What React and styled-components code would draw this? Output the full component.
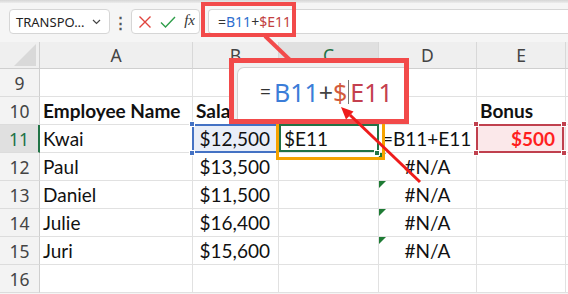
import styled, { createGlobalStyle } from "styled-components";

const GlobalStyle = createGlobalStyle`
  html, body { margin: 0; padding: 0; background: #f5f5f5; }
  * { box-sizing: border-box; }
`;

const rows = [
  { n: 9 },
  { n: 10, a: "Employee Name", b: "Sala", e: "Bonus", head: true },
  { n: 11, a: "Kwai", b: "$12,500", c: "$E11", d: "=B11+E11", e: "$500", active: true },
  { n: 12, a: "Paul", b: "$13,500", d: "#N/A", flag: true },
  { n: 13, a: "Daniel", b: "$11,500", d: "#N/A", flag: true },
  { n: 14, a: "Julie", b: "$16,400", d: "#N/A", flag: true },
  { n: 15, a: "Juri", b: "$15,600", d: "#N/A", flag: true },
  { n: 16 },
];

const cols = ["A", "B", "C", "D", "E", ""];

export default function App() {
  return (
    <Page>
      <GlobalStyle />
      <TopEdge />
      <FormulaBar>
        <NameBox>
          <span>TRANSPO...</span>
          <svg width="9" height="6" viewBox="0 0 9 6">
            <path d="M1 1l3.5 3.5L8 1" fill="none" stroke="#444" strokeWidth="1.2" />
          </svg>
        </NameBox>
        <Dots>⋮</Dots>
        <ActionBox>
          <svg width="14" height="14" viewBox="0 0 14 14">
            <path d="M1.5 1.5l11 11M12.5 1.5l-11 11" stroke="#e0443e" strokeWidth="1.4" />
          </svg>
          <svg width="16" height="14" viewBox="0 0 16 14">
            <path d="M1 7.5l4.5 4.5L15 2" fill="none" stroke="#2e9e4a" strokeWidth="1.4" />
          </svg>
          <Fx>fx</Fx>
        </ActionBox>
        <FormulaInput>
          <Ref $color="#333">=</Ref>
          <Ref $color="#2f6fcf">B11</Ref>
          <Ref $color="#333">+</Ref>
          <Ref $color="#c2403f">$E11</Ref>
        </FormulaInput>
      </FormulaBar>

      <Grid>
        <Corner>
          <svg width="22" height="22" viewBox="0 0 22 22">
            <path d="M22 0V22H0Z" fill="#d9d9d9" />
          </svg>
        </Corner>
        {cols.map((c) => (
          <ColHead key={c || "f"} $selected={c === "C"}>{c}</ColHead>
        ))}
        {rows.map((r) => [
          <RowHead key={r.n + "h"} $selected={r.active}>{r.n}</RowHead>,
          <Cell key={r.n + "a"} $bold={r.head}>{r.a}</Cell>,
          r.active ? (
            <BlueRefCell key={r.n + "b"} $align="right">
              {r.b}
              <Handle $color="#4472c4" $pos="tl" />
              <Handle $color="#4472c4" $pos="bl" />
            </BlueRefCell>
          ) : (
            <Cell key={r.n + "b"} $bold={r.head} $align={r.head ? "left" : "right"}>{r.b}</Cell>
          ),
          r.active ? (
            <ActiveCell key={r.n + "c"}>
              {r.c}
              <Handle $color="#217346" $pos="br" />
            </ActiveCell>
          ) : (
            <Cell key={r.n + "c"} />
          ),
          <DCell key={r.n + "d"} $flag={r.flag} $align={r.flag ? "center" : "left"}>{r.d}</DCell>,
          r.active ? (
            <RedRefCell key={r.n + "e"} $align="right">
              {r.e}
              <Handle $color="#c0404e" $pos="tl" />
              <Handle $color="#c0404e" $pos="tr" />
              <Handle $color="#c0404e" $pos="bl" />
              <Handle $color="#c0404e" $pos="br" />
            </RedRefCell>
          ) : (
            <Cell key={r.n + "e"} $bold={r.head}>{r.e}</Cell>
          ),
          <Cell key={r.n + "f"} />,
        ])}
      </Grid>

      <BarHighlight />
      <Callout>
        <ZoomedInput>
          <BigRef $color="#333" $small>=</BigRef>
          <BigRef $color="#3b7dd8">B11</BigRef>
          <BigRef $color="#444">+</BigRef>
          <BigRef $color="#d25a3c">$</BigRef>
          <Caret />
          <BigRef $color="#c4404f">E11</BigRef>
        </ZoomedInput>
      </Callout>

      <Arrows width="568" height="294" viewBox="0 0 568 294">
        <line x1="265" y1="36" x2="290" y2="60" stroke="#f24a4a" strokeWidth="4" />
        <line x1="420" y1="182" x2="350" y2="115" stroke="#ee1c1c" strokeWidth="3" />
        <polygon points="341,107 353.5,111.5 346,119.5" fill="#ee1c1c" />
      </Arrows>
    </Page>
  );
}

const Page = styled.div`
  position: relative;
  width: 568px;
  height: 294px;
  overflow: hidden;
  background: #f5f5f5;
  font-family: "Noto Sans", "Open Sans", sans-serif;
`;

const TopEdge = styled.div`
  height: 3px;
  background: linear-gradient(#d6d6d6, #ececec);
`;

const FormulaBar = styled.div`
  display: flex;
  align-items: center;
  height: 39px;
  padding: 6px 0 8px 9px;
`;

const Box = styled.div`
  height: 25px;
  background: #fff;
  border: 1px solid #d6d6d6;
  border-radius: 4px;
  display: flex;
  align-items: center;
`;

const NameBox = styled(Box)`
  width: 101px;
  padding: 0 8px 0 6px;
  justify-content: space-between;
  font-size: 13px;
  color: #222;
`;

const Dots = styled.div`
  width: 21px;
  text-align: center;
  font-size: 15px;
  font-weight: 700;
  color: #555;
`;

const ActionBox = styled(Box)`
  width: 69px;
  padding: 0 4px 0 6px;
  justify-content: space-between;
`;

const Fx = styled.span`
  font-family: "Liberation Serif", serif;
  font-style: italic;
  font-size: 15px;
  color: #333;
  margin-top: -2px;
`;

const FormulaInput = styled(Box)`
  flex: 1;
  margin-left: 8px;
  border-radius: 4px 0 0 4px;
  border-right: none;
  padding-left: 9px;
  font-size: 14px;
`;

const Ref = styled.span`
  color: ${(p) => p.$color};
`;

const Grid = styled.div`
  display: grid;
  grid-template-columns: 40px 153px 86px 100px 98px 89px 1fr;
  grid-template-rows: 27px repeat(8, 28px);
  background: #fff;
`;

const Corner = styled.div`
  background: #efefef;
  border-right: 1px solid #cfcfcf;
  border-bottom: 1px solid #cfcfcf;
  display: flex;
  align-items: flex-end;
  justify-content: flex-end;
  padding: 0 3px 2px 0;
`;

const ColHead = styled.div`
  background: ${(p) => (p.$selected ? "#e0e0e0" : "#efefef")};
  color: ${(p) => (p.$selected ? "#217346" : "#444")};
  border-right: 1px solid #d8d8d8;
  border-bottom: ${(p) => (p.$selected ? "2px solid #217346" : "1px solid #cfcfcf")};
  display: flex;
  align-items: center;
  justify-content: center;
  font-size: 17.5px;
`;

const RowHead = styled.div`
  background: ${(p) => (p.$selected ? "#e0e0e0" : "#f3f3f3")};
  color: ${(p) => (p.$selected ? "#217346" : "#444")};
  border-right: ${(p) => (p.$selected ? "2px solid #217346" : "1px solid #cfcfcf")};
  border-bottom: 1px solid #dcdcdc;
  display: flex;
  align-items: center;
  justify-content: center;
  font-size: 17.5px;
`;

const Cell = styled.div`
  position: relative;
  border-right: 1px solid #e1e1e1;
  border-bottom: 1px solid #e1e1e1;
  display: flex;
  align-items: center;
  justify-content: ${(p) => (p.$align === "right" ? "flex-end" : p.$align === "center" ? "center" : "flex-start")};
  padding: 0 ${(p) => (p.$align === "right" ? "8px" : "3px")} 0 3px;
  font-family: Lato, "Liberation Sans", sans-serif;
  font-size: 19px;
  font-weight: ${(p) => (p.$bold ? 700 : 400)};
  color: #111;
  white-space: nowrap;
`;

const BlueRefCell = styled(Cell)`
  background: #e9eef8;
  &::after {
    content: "";
    position: absolute;
    inset: -1px -1px -1px -1px;
    border: 2px solid #4472c4;
  }
`;

const ActiveCell = styled(Cell)`
  padding-left: 5px;
  &::before {
    content: "";
    position: absolute;
    inset: -1px -1px 0 0;
    border: 2px solid #217346;
  }
  &::after {
    content: "";
    position: absolute;
    top: -4px;
    left: -3px;
    right: -7px;
    bottom: -8px;
    border: 3px solid #f5a300;
    z-index: 1;
  }
`;

const DCell = styled(Cell)`
  &::before {
    content: ${(p) => (p.$flag ? '""' : "none")};
    position: absolute;
    top: 0;
    left: 0;
    border-top: 7px solid #1e7b34;
    border-right: 7px solid transparent;
  }
`;

const RedRefCell = styled(Cell)`
  background: #fbe8ea;
  color: #ff1f1f;
  font-weight: 700;
  padding-right: 10px;
  &::after {
    content: "";
    position: absolute;
    inset: -1px 1px -1px -1px;
    border: 2px solid #c0404e;
  }
`;

const corners = {
  tl: "top: -4px; left: -4px;",
  tr: "top: -4px; right: -2px;",
  bl: "bottom: -4px; left: -4px;",
  br: "bottom: -4px; right: -2px;",
};

const Handle = styled.span`
  position: absolute;
  width: 6px;
  height: 6px;
  background: ${(p) => p.$color};
  border: 1px solid #fff;
  z-index: 2;
  ${(p) => corners[p.$pos]}
`;

const BarHighlight = styled.div`
  position: absolute;
  left: 201px;
  top: 2px;
  width: 95px;
  height: 35px;
  border: 4px solid #f24a4a;
`;

const Callout = styled.div`
  position: absolute;
  left: 229px;
  top: 58px;
  width: 180px;
  height: 66px;
  border: 5px solid #f24a4a;
  background: #f1f1f1;
  padding: 4px 0 0 3px;
  overflow: hidden;
  z-index: 3;
`;

const ZoomedInput = styled.div`
  height: 60px;
  background: #fff;
  border: 1px solid #d2d2d2;
  border-radius: 7px 0 0 7px;
  border-right: none;
  display: flex;
  align-items: flex-start;
  padding: 7px 0 0 22px;
  font-family: "Noto Sans", sans-serif;
  font-size: 25px;
  line-height: 34px;
`;

const BigRef = styled.span`
  color: ${(p) => p.$color};
  font-size: ${(p) => (p.$small ? "19px" : "25px")};
  margin-right: ${(p) => (p.$small ? "3px" : "0")};
`;

const Caret = styled.span`
  width: 1px;
  height: 24px;
  margin: 5px 1px 0 1px;
  background: #777;
`;

const Arrows = styled.svg`
  position: absolute;
  left: 0;
  top: 0;
  pointer-events: none;
  z-index: 4;
`;
